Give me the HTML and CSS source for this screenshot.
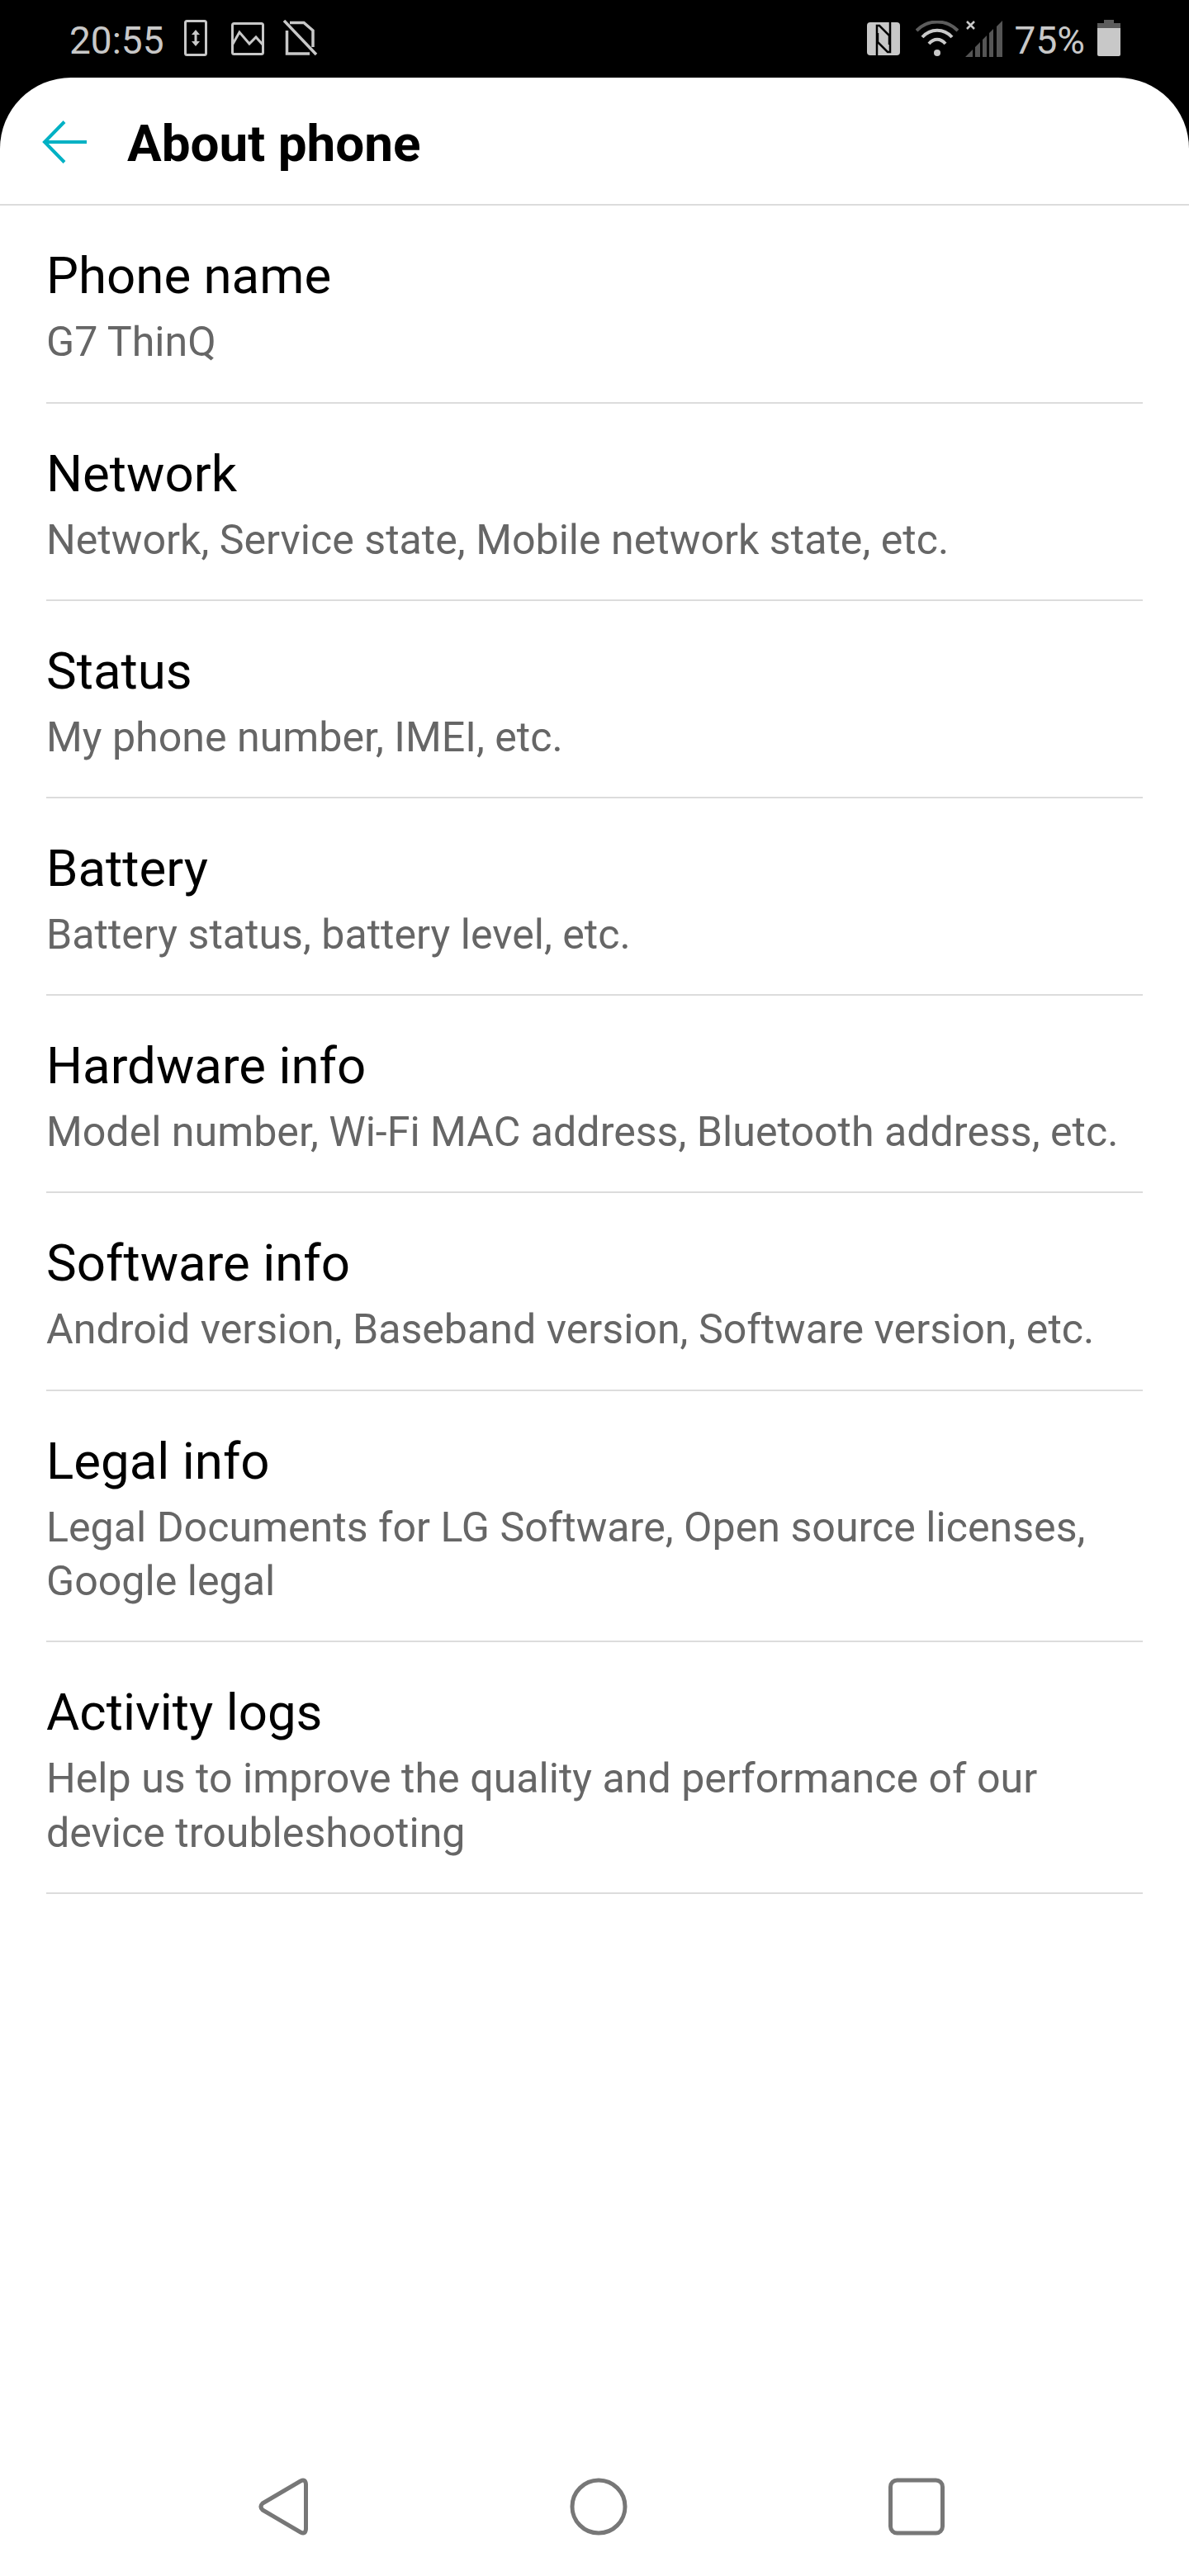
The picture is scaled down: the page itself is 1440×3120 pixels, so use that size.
FILE: index.html
```html
<!DOCTYPE html>
<html lang="en">
<head>
<meta charset="utf-8">
<title>About phone</title>
<link rel="stylesheet" href="styles.css">
</head>
<body>
<div class="screen">
  <header class="status">
    <div class="status-left">
      <span class="time">20:55</span>
      <svg class="ic-phone" width="28" height="44" viewBox="0 0 28 44"><rect x="1.500" y="1.500" width="25" height="41" rx="2" fill="none" stroke="#c8c8c8" stroke-width="3"/><path d="M14 12l5 6h-3.500v8H19l-5 6-5-6h3.500v-8H9z" fill="#c8c8c8"/></svg>
      <svg class="ic-image" width="40" height="40" viewBox="0 0 40 40"><rect x="1.500" y="1.500" width="37" height="37" rx="2" fill="none" stroke="#c8c8c8" stroke-width="3"/><path d="M1 28l9-16 12 14 8-8 9 10" fill="none" stroke="#c8c8c8" stroke-width="3"/></svg>
      <svg class="ic-sim" width="42" height="44" viewBox="0 0 42 44"><path d="M4.500 13v28H32M8 3.500h17L36 13v20" fill="none" stroke="#c8c8c8" stroke-width="3.500"/><path d="M1 1l39 41" stroke="#c8c8c8" stroke-width="3.500"/></svg>
    </div>
    <div class="status-right">
      <svg class="ic-nfc" width="40" height="40" viewBox="0 0 40 40"><rect width="40" height="40" rx="4" fill="#c8c8c8"/><path d="M12 40V4h3l12 12v11M28 0v36h-3L13 24V13" fill="none" stroke="#000" stroke-width="2.500"/></svg>
      <svg class="ic-wifi" width="52" height="44" viewBox="0 0 52 44"><path d="M1 12C15 -2 37 -2 51 12" fill="none" stroke="#5c5c5c" stroke-width="4"/><path d="M8 20C18 9 34 9 44 20" fill="none" stroke="#c8c8c8" stroke-width="4"/><path d="M16 28C22 21 30 21 36 28" fill="none" stroke="#c8c8c8" stroke-width="4"/><circle cx="26" cy="39" r="4" fill="#c8c8c8"/></svg>
      <svg class="ic-signal" width="46" height="44" viewBox="0 0 46 44"><path d="M2 1l9 9M11 1l-9 9" stroke="#c8c8c8" stroke-width="2.500"/><path d="M0 44l9-9v9zM12 44V32l6-6v18zM21 44V23l5-5v26zM29 44V15l5-5v34zM38 44V7l7-7v44z" fill="#555"/></svg>
      <span class="batt-text">75%</span>
      <svg class="ic-batt" width="28" height="44" viewBox="0 0 28 44"><path d="M8 0h12v4h8v6H0V4h8z" fill="#5c5c5c"/><path d="M0 10h28v32a2 2 0 0 1-2 2H2a2 2 0 0 1-2-2z" fill="#c8c8c8"/></svg>
    </div>
  </header>
  <main class="panel">
    <div class="appbar">
      <svg class="back" width="54" height="52" viewBox="0 0 54 52"><path d="M27 1.500L3 26l24 24.500M3 26h51" fill="none" stroke="#00b1c4" stroke-width="4"/></svg>
      <h1 class="title">About phone</h1>
    </div>
    <ul class="list">
      <li class="row"><div class="row-title">Phone name</div><div class="row-sub">G7 ThinQ</div></li>
      <li class="row"><div class="row-title">Network</div><div class="row-sub">Network, Service state, Mobile network state, etc.</div></li>
      <li class="row"><div class="row-title">Status</div><div class="row-sub">My phone number, IMEI, etc.</div></li>
      <li class="row"><div class="row-title">Battery</div><div class="row-sub">Battery status, battery level, etc.</div></li>
      <li class="row"><div class="row-title">Hardware info</div><div class="row-sub">Model number, Wi-Fi MAC address, Bluetooth address, etc.</div></li>
      <li class="row"><div class="row-title">Software info</div><div class="row-sub">Android version, Baseband version, Software version, etc.</div></li>
      <li class="row"><div class="row-title">Legal info</div><div class="row-sub">Legal Documents for LG Software, Open source licenses, Google legal</div></li>
      <li class="row"><div class="row-title">Activity logs</div><div class="row-sub">Help us to improve the quality and performance of our device troubleshooting</div></li>
    </ul>
    <nav class="navbar">
      <svg width="62" height="70" viewBox="0 0 62 70"><path d="M52 4Q58 1 58.500 8V62Q58 69 52 66L6 39Q2 35 6 31z" fill="none" stroke="#777" stroke-width="5" stroke-linejoin="round"/></svg>
      <svg width="70" height="70" viewBox="0 0 70 70"><circle cx="35" cy="35" r="32" fill="none" stroke="#777" stroke-width="5"/></svg>
      <svg width="68" height="70" viewBox="0 0 68 70"><rect x="2.500" y="3" width="63" height="64" rx="8" fill="none" stroke="#777" stroke-width="5"/></svg>
    </nav>
  </main>
</div>
</body>
</html>
```
FILE: styles.css
```css
* { box-sizing: border-box; }
html, body { margin: 0; padding: 0; background: #000; }
.screen { width: 1440px; height: 3120px; display: flex; flex-direction: column; font-family: Roboto, sans-serif; }
.status { height: 94px; flex: none; display: flex; justify-content: space-between; padding: 24px 83px 0 84px; color: #c8c8c8; }
.status-left, .status-right { display: flex; align-items: flex-start; }
.time { font-size: 46px; line-height: 46px; margin: 2px 24px 0 0; }
.ic-image { margin: 3px 0 0 29px; }
.ic-sim { margin: 0 0 0 23px; }
.ic-nfc { margin: 3px 19px 0 0; }
.ic-wifi { margin: 1px 8px 0 0; }
.ic-signal { margin: 1px 14px 0 0; }
.batt-text { font-size: 46px; line-height: 46px; margin: 2px 15px 0 0; }
.panel { flex: 1; background: #fff; border-radius: 86px 86px 0 0; display: flex; flex-direction: column; }
.appbar { height: 155.400px; flex: none; border-bottom: 2px solid #dcdcdc; display: flex; align-items: center; padding-left: 51px; }
.back { flex: none; margin-top: 2px; }
.title { margin: 6px 0 0 49px; font-size: 62px; font-weight: 700; color: #000; line-height: 70px; }
.list { list-style: none; margin: 0 56px; padding: 0; flex: 1; }
.row { border-bottom: 2px solid #dcdcdc; padding: 50px 0 39.700px; }
.row-title { font-size: 61.800px; line-height: 70px; color: #000; }
.row-sub { font-size: 50.150px; line-height: 65.500px; color: #666; margin-top: 12px; }
.navbar { height: 190px; flex: none; display: flex; gap: 316px; padding: 71px 0 49px 312px; }
```
